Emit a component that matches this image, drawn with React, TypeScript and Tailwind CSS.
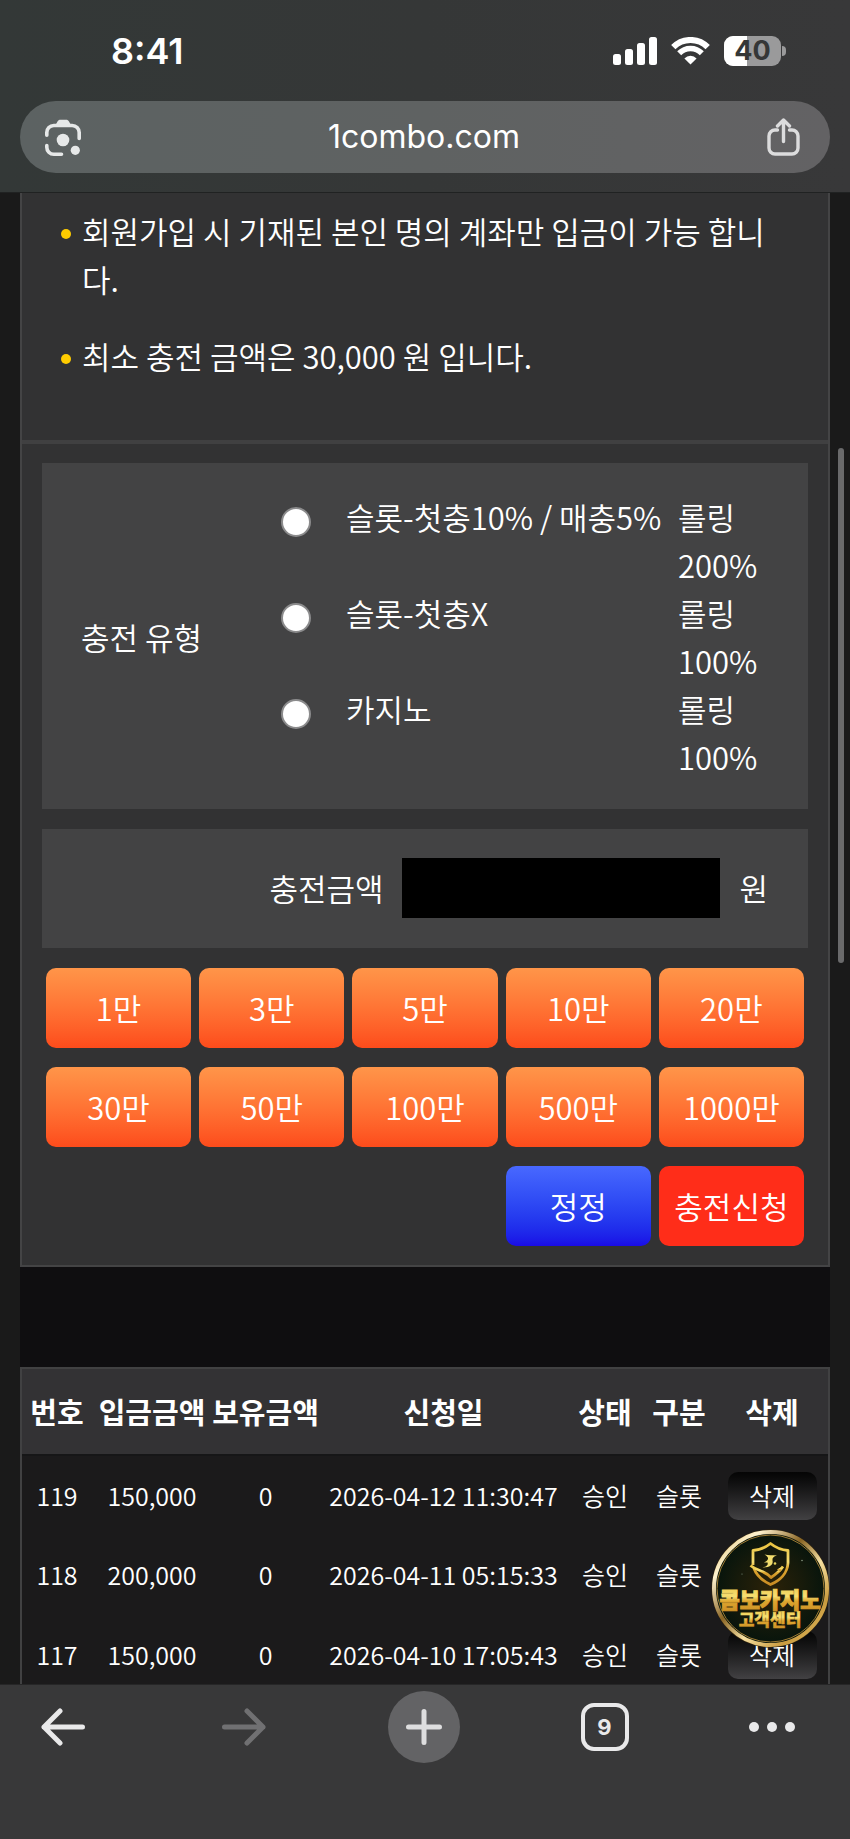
import { useState } from 'react';

const notices = [
  '회원가입 시 기재된 본인 명의 계좌만 입금이 가능 합니다.',
  '최소 충전 금액은 30,000 원 입니다.',
];

const chargeTypes = [
  { id: 'slot-bonus', name: '슬롯-첫충10% / 매충5%', rolling: '롤링 200%' },
  { id: 'slot-none', name: '슬롯-첫충X', rolling: '롤링 100%' },
  { id: 'casino', name: '카지노', rolling: '롤링 100%' },
];

// unit: 만 (10,000 won)
const amounts = [1, 3, 5, 10, 20, 30, 50, 100, 500, 1000];

const columns = [
  { label: '번호', width: 'w-[70px]' },
  { label: '입금금액', width: 'w-[120px]' },
  { label: '보유금액', width: 'w-[107px]' },
  { label: '신청일', width: 'w-[249px]' },
  { label: '상태', width: 'w-[74px]' },
  { label: '구분', width: 'w-[74px]' },
  { label: '삭제', width: 'w-[112px]' },
];

const history = [
  { no: 119, amount: '150,000', balance: 0, date: '2026-04-12 11:30:47', status: '승인', kind: '슬롯' },
  { no: 118, amount: '200,000', balance: 0, date: '2026-04-11 05:15:33', status: '승인', kind: '슬롯' },
  { no: 117, amount: '150,000', balance: 0, date: '2026-04-10 17:05:43', status: '승인', kind: '슬롯' },
];

export default function App() {
  return (
    <div className="relative flex h-screen flex-col overflow-hidden bg-[#1a1a1a] font-['Noto_Sans_CJK_KR','Noto_Sans',sans-serif] text-white">
      <BrowserHeader />
      <main className="min-h-0 flex-1 overflow-hidden px-5">
        <div className="bg-[#0f0e10]">
          <ChargeSection />
          <HistoryTable />
        </div>
      </main>
      <BrowserToolbar />
      <SupportBadge />
      <div className="absolute top-[448px] right-[6px] h-[515px] w-[6px] rounded-full bg-[#6a6a6b]" />
    </div>
  );
}

function BrowserHeader() {
  return (
    <header className="border-b border-[#202222] bg-linear-to-r from-[#333837] via-[#353737] to-[#383839] px-5 pb-[19px] font-[Inter,sans-serif]">
      <div className="flex h-[101px] items-center justify-between pr-11 pl-[91px]">
        <span className="text-4xl font-semibold">8:41</span>
        <div className="flex items-center gap-[14px]">
          <SignalIcon />
          <WifiIcon />
          <Battery level={40} />
        </div>
      </div>
      <div className="flex h-[72px] items-center justify-between rounded-full bg-linear-to-r from-[#5c6262] via-[#5f6262] to-[#636264] px-[25px]">
        <button type="button" aria-label="Lens">
          <LensIcon />
        </button>
        <a href="#" className="text-[32px]">1combo.com</a>
        <button type="button" aria-label="Share" className="pr-[5px]">
          <ShareIcon />
        </button>
      </div>
    </header>
  );
}

function ChargeSection() {
  const [amount, setAmount] = useState(0);

  return (
    <section className="border-x-2 border-b-2 border-[#444445] bg-[#323233] text-[31px] leading-[48px] font-[350]">
      <ul className="flex flex-col gap-[29px] border-b-4 border-[#404041] px-[39px] pt-[14px] pb-[60px]">
        {notices.map((n) => (
          <li key={n} className="flex items-start">
            <span className="mt-[22px] mr-[11px] size-[10px] shrink-0 rounded-full bg-[#ffcc00]" />
            <span className="break-all">{n}</span>
          </li>
        ))}
      </ul>

      <form className="flex flex-col gap-5 px-5 py-[19px]" onSubmit={(e) => e.preventDefault()}>
        <fieldset className="flex items-center bg-[#434344] pt-[30px] pr-[38px] pb-[28px] pl-[39px]" aria-labelledby="charge-type">
          <span id="charge-type" className="w-[200px] shrink-0">충전 유형</span>
          <div className="flex-1">
            {chargeTypes.map((t) => (
              <div key={t.id} className="flex items-start">
                <input
                  id={t.id}
                  type="radio"
                  name="chargeType"
                  className="mt-[14px] mr-[35px] size-[30px] shrink-0 appearance-none rounded-full border-2 border-[#8b8b8c] bg-white checked:border-[8px] checked:border-blue-600"
                />
                <label htmlFor={t.id} className="flex flex-1">
                  <span className="flex-1 whitespace-nowrap">{t.name}</span>
                  <span className="w-[92px]">{t.rolling}</span>
                </label>
              </div>
            ))}
          </div>
        </fieldset>

        <div className="flex items-center justify-end bg-[#434344] pt-[29px] pr-10 pb-[30px]">
          <label htmlFor="amount">충전금액</label>
          <input
            id="amount"
            type="text"
            inputMode="numeric"
            value={amount ? amount.toLocaleString() : ''}
            onChange={(e) => setAmount(Number(e.target.value.replace(/\D/g, '')))}
            className="mx-[19px] h-[60px] w-[318px] bg-black px-4 text-right outline-none"
          />
          <span>원</span>
        </div>

        <div className="grid grid-cols-5 gap-x-2 gap-y-[19px] px-1">
          {amounts.map((a) => (
            <button
              key={a}
              type="button"
              onClick={() => setAmount(amount + a * 10000)}
              className="h-20 rounded-[10px] bg-linear-to-b from-[#ff9549] to-[#fd4b1b]"
            >
              {a}만
            </button>
          ))}
          <button
            type="button"
            onClick={() => setAmount(0)}
            className="col-start-4 h-20 rounded-[10px] bg-linear-to-b from-[#4868ff] to-[#1a0ae6]"
          >
            정정
          </button>
          <button type="submit" className="h-20 rounded-[10px] bg-[#ff2d19]">충전신청</button>
        </div>
      </form>
    </section>
  );
}

function HistoryTable() {
  return (
    <div className="mt-[100px] border-2 border-[#414142] bg-[#1b1a1b]">
      <table className="w-full table-fixed text-center whitespace-nowrap">
        <thead>
          <tr className="h-[86px] border-b-2 border-[#161617] bg-[#333234] text-[29px]">
            {columns.map((c) => (
              <th key={c.label} scope="col" className={`${c.width} p-0 font-bold`}>{c.label}</th>
            ))}
          </tr>
        </thead>
        <tbody className="text-[25px] font-[350]">
          {history.map((h) => (
            <tr key={h.no} className="h-20">
              <td className="p-0">{h.no}</td>
              <td className="p-0">{h.amount}</td>
              <td className="p-0">{h.balance}</td>
              <td className="p-0">{h.date}</td>
              <td className="p-0">{h.status}</td>
              <td className="p-0">{h.kind}</td>
              <td className="p-0">
                <button type="button" className="h-12 w-[89px] rounded-[10px] bg-linear-to-b from-[#050505] to-[#424143] align-middle">
                  삭제
                </button>
              </td>
            </tr>
          ))}
        </tbody>
      </table>
    </div>
  );
}

function SupportBadge() {
  return (
    <a href="#" className="absolute right-5 bottom-[191px]">
      <svg width="119" height="119" viewBox="0 0 119 119" role="img" aria-label="콤보카지노 고객센터">
        <defs>
          <linearGradient id="ring" x1="0" y1="0" x2="1" y2="1">
            <stop offset="0" stopColor="#d9b765" />
            <stop offset="0.2" stopColor="#fff3cf" />
            <stop offset="0.42" stopColor="#8a6524" />
            <stop offset="0.6" stopColor="#f5dfa0" />
            <stop offset="0.8" stopColor="#c99b3f" />
            <stop offset="1" stopColor="#e8c56b" />
          </linearGradient>
          <linearGradient id="gold" x1="0" y1="0" x2="0" y2="1">
            <stop offset="0" stopColor="#e9c33f" />
            <stop offset="0.45" stopColor="#f7df72" />
            <stop offset="0.6" stopColor="#dda62f" />
            <stop offset="1" stopColor="#c98c24" />
          </linearGradient>
          <radialGradient id="disc">
            <stop offset="0" stopColor="#2c2208" />
            <stop offset="0.6" stopColor="#161a0b" />
            <stop offset="1" stopColor="#06140c" />
          </radialGradient>
        </defs>
        <circle cx="59.5" cy="59.5" r="59" fill="#3a2b10" />
        <circle cx="59.5" cy="59.5" r="56.5" fill="url(#disc)" stroke="url(#ring)" strokeWidth="4" />
        <circle cx="59.5" cy="59.5" r="53.5" fill="none" stroke="#9c7a33" strokeWidth="1" />
        <g fill="none" stroke="url(#gold)" strokeWidth="2.8" strokeLinejoin="round">
          <path d="M42 36V21.500C49 21 54.500 18.500 59.500 14.500C64.500 18.500 70 21 77 21.500V34C76.500 44 69 51.500 59.500 55.500C52 52 45.500 46.500 42.800 39" />
          <path d="M39.500 36.500C46 42 53 41 60 48.500C64.500 45.500 69 42 72 37.500" />
        </g>
        <path d="M72 37L66 40.500L69.500 43Z" fill="url(#gold)" />
        <path d="M53.500 25.500C57.500 26.500 62 26 66 26.500C62.500 27.500 61 29 61.500 31.500C62.500 35 60 38.500 51.500 38.500C55.500 37.500 57.500 36 56.500 33.500L53 33.500C57 31.500 59.500 29 53.500 25.500Z" fill="#f2dd6e" />
        <circle cx="64" cy="34.500" r="1.300" fill="#e6d35c" />
        <circle cx="91" cy="31.500" r="0.700" fill="#9fb39a" />
        <circle cx="31" cy="45" r="0.600" fill="#7f9180" />
        <g fontFamily="'Noto Sans CJK KR', sans-serif" fontWeight="900" textAnchor="middle" fill="url(#gold)" stroke="url(#gold)">
          <text x="59" y="79" fontSize="22" strokeWidth="1">콤보카지노</text>
          <text x="59" y="97" fontSize="17" strokeWidth="0.4">고객센터</text>
        </g>
      </svg>
    </a>
  );
}

function BrowserToolbar() {
  return (
    <nav className="flex h-[155px] shrink-0 items-start justify-between border-t border-[#262627] bg-[#383839] pt-[6px] pr-[55px] pl-[27px]">
      <button type="button" aria-label="Back" className="flex h-[72px] w-[72px] items-center justify-center text-[#e9e9ea]">
        <svg width="44" height="38" viewBox="0 0 44 38" fill="none" stroke="currentColor" strokeWidth="5" strokeLinecap="round" strokeLinejoin="round">
          <path d="M19 3L3 19L19 35M3 19H41.500" />
        </svg>
      </button>
      <button type="button" aria-label="Forward" disabled className="flex h-[72px] w-[72px] items-center justify-center text-[#707072]">
        <svg width="44" height="38" viewBox="0 0 44 38" fill="none" stroke="currentColor" strokeWidth="5" strokeLinecap="round" strokeLinejoin="round">
          <path d="M25 3L41 19L25 35M41 19H2.500" />
        </svg>
      </button>
      <button type="button" aria-label="New tab" className="flex size-[72px] items-center justify-center rounded-full bg-[#636365] text-[#dededf]">
        <svg width="36" height="36" viewBox="0 0 36 36" fill="none" stroke="currentColor" strokeWidth="5" strokeLinecap="round">
          <path d="M18 2.500V33.500M2.500 18H33.500" />
        </svg>
      </button>
      <button type="button" aria-label="Tabs" className="flex h-[72px] w-[72px] items-center justify-center">
        <span className="flex size-12 items-center justify-center rounded-[13px] border-4 border-[#e9e9ea] font-[Inter,sans-serif] text-[22px] font-bold text-[#e9e9ea]">
          9
        </span>
      </button>
      <button type="button" aria-label="Menu" className="flex h-[72px] w-[46px] items-center justify-between">
        <span className="size-[10px] rounded-full bg-[#e9e9ea]" />
        <span className="size-[10px] rounded-full bg-[#e9e9ea]" />
        <span className="size-[10px] rounded-full bg-[#e9e9ea]" />
      </button>
    </nav>
  );
}

function SignalIcon() {
  return (
    <svg width="44" height="28" viewBox="0 0 44 28" fill="white">
      <rect x="0" y="17" width="8" height="11" rx="2.500" />
      <rect x="12" y="12" width="8" height="16" rx="2.500" />
      <rect x="24" y="6" width="8" height="22" rx="2.500" />
      <rect x="36" y="0" width="8" height="28" rx="2.500" />
    </svg>
  );
}

function WifiIcon() {
  return (
    <svg width="39" height="28" viewBox="0 0 39 28" fill="none" stroke="white">
      <path d="M2.300 10.200A24 24 0 0 1 36.700 10.200" strokeWidth="6" />
      <path d="M8.200 16.200A15.800 15.800 0 0 1 30.800 16.200" strokeWidth="5.600" />
      <path d="M19.500 27.500L13.400 21.400A8.600 8.600 0 0 1 25.600 21.400Z" fill="white" stroke="none" />
    </svg>
  );
}

function Battery({ level }: { level: number }) {
  return (
    <div className="flex items-center gap-px" role="img" aria-label={`Battery ${level}%`}>
      <div className="relative flex h-[30px] w-[57px] items-center justify-center overflow-hidden rounded-[9px] bg-[#9a9a9b]">
        <div className="absolute inset-y-0 left-0 bg-white" style={{ width: `${level}%` }} />
        <span className="relative text-[27px] leading-none font-bold text-[#353737]">{level}</span>
      </div>
      <div className="h-[10px] w-1 rounded-r-full bg-[#9a9a9b]" />
    </div>
  );
}

function LensIcon() {
  return (
    <svg width="36" height="37" viewBox="0 0 36 37" fill="none" stroke="#e6e8e8" strokeWidth="3.600" strokeLinecap="round">
      <path d="M1.800 16.200V13.500A7 7 0 0 1 8.800 6.500H27.200A7 7 0 0 1 34.200 13.500V19.500M1.800 26.500V28.200A7 7 0 0 0 8.800 35.200H16.500" />
      <path d="M10 7L12.500 2.500C13.200 1.200 14 0.700 15.500 0.700H21C22.500 0.700 23.300 1.200 24 2.500L26.500 7Z" fill="#e6e8e8" stroke="none" />
      <circle cx="18" cy="21" r="6.300" fill="#e6e8e8" stroke="none" />
      <circle cx="30.300" cy="31.300" r="4.600" fill="#e6e8e8" stroke="none" />
    </svg>
  );
}

function ShareIcon() {
  return (
    <svg width="33" height="38" viewBox="0 0 33 38" fill="none" stroke="#dcdcdd" strokeWidth="3.400" strokeLinecap="round" strokeLinejoin="round">
      <path d="M10.500 12H8A6 6 0 0 0 2 18V30A6 6 0 0 0 8 36H25A6 6 0 0 0 31 30V18A6 6 0 0 0 25 12H22.500" />
      <path d="M16.500 23.500V2M10.500 8L16.500 2L22.500 8" />
    </svg>
  );
}
